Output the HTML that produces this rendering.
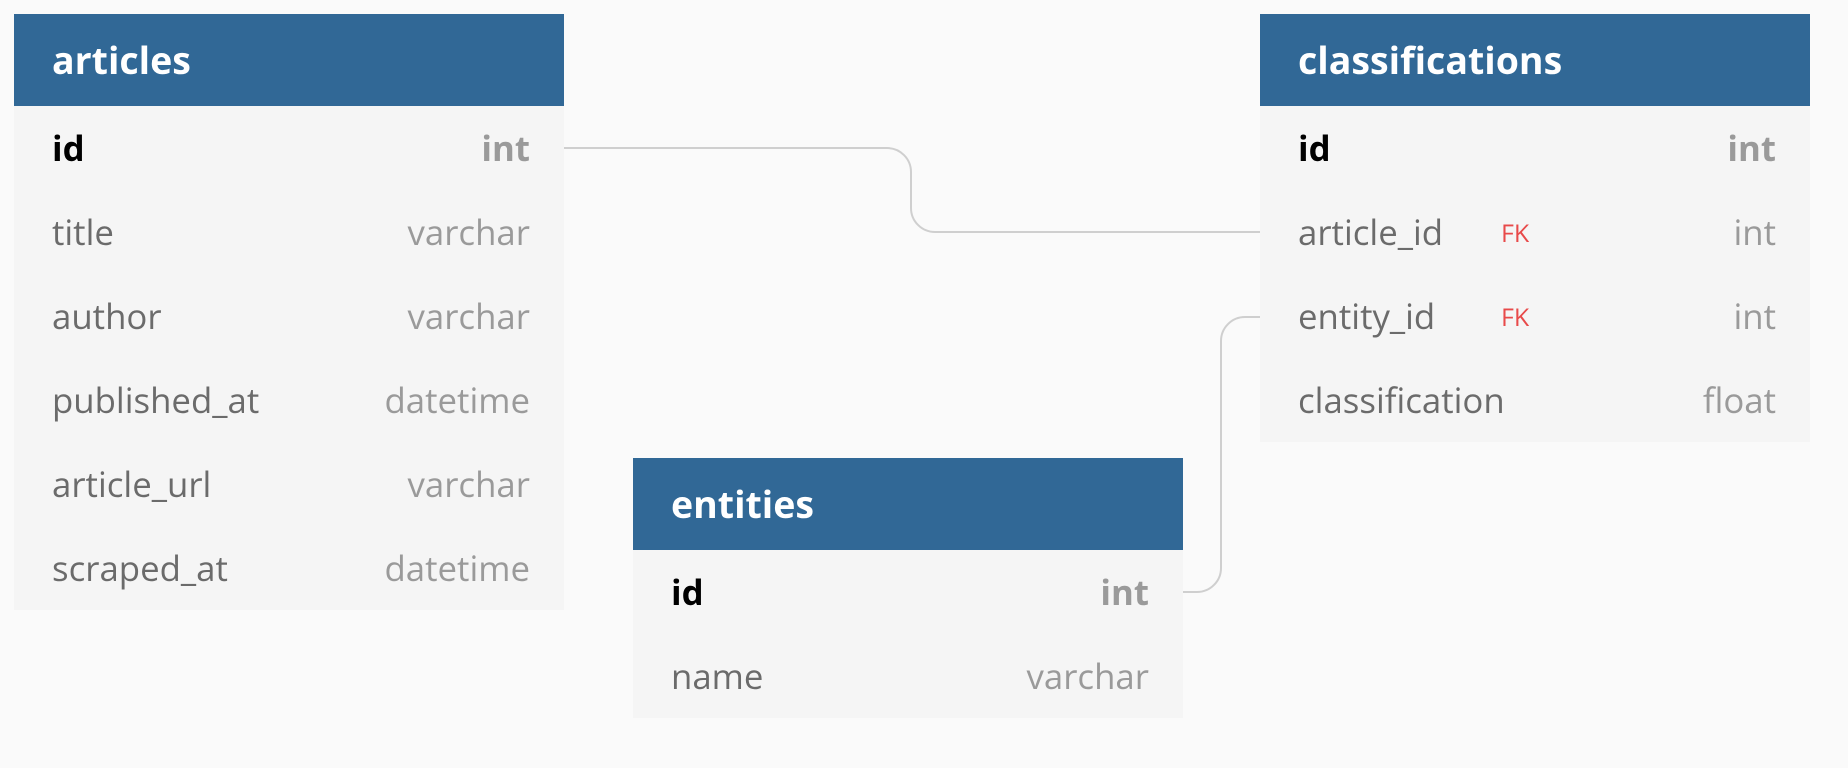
<!DOCTYPE html>
<html><head><style>
body{margin:0;width:1848px;height:768px;background:#fafafa;position:relative;overflow:hidden;font-family:"Open Sans","Liberation Sans",sans-serif}
.t{position:absolute;background:#f5f5f5;width:550px}
.h{height:92px;background:#316896;color:#fff;font-weight:bold;font-size:37.5px;line-height:92px;padding-left:38px;box-sizing:border-box}
.r{height:84px;line-height:86px;font-size:34.8px;color:#6b6b6b;position:relative;padding-left:38px}
.r .ty{position:absolute;right:34px;top:0;color:#9a9a9a}
.r.pk{color:#000;font-weight:bold}
.r.pk .ty{color:#9a9a9a}
.fk{position:absolute;left:241px;top:0;color:#e84a4a;font-size:25px}
svg{position:absolute;left:0;top:0}
</style></head><body>
<svg width="1848" height="768"><g fill="none" stroke="#cfcfcf" stroke-width="2">
<path d="M564 148 H887 A24 24 0 0 1 911 172 V208 A24 24 0 0 0 935 232 H1260"/>
<path d="M1182 592 H1197 A24 24 0 0 0 1221 568 V341 A24 24 0 0 1 1245 317 H1260"/>
</g></svg>
<div class="t" style="left:14px;top:14px">
<div class="h">articles</div>
<div class="r pk">id<span class="ty">int</span></div>
<div class="r">title<span class="ty">varchar</span></div>
<div class="r">author<span class="ty">varchar</span></div>
<div class="r">published_at<span class="ty">datetime</span></div>
<div class="r">article_url<span class="ty">varchar</span></div>
<div class="r">scraped_at<span class="ty">datetime</span></div>
</div>
<div class="t" style="left:1260px;top:14px">
<div class="h">classifications</div>
<div class="r pk">id<span class="ty">int</span></div>
<div class="r">article_id<span class="fk">FK</span><span class="ty">int</span></div>
<div class="r">entity_id<span class="fk">FK</span><span class="ty">int</span></div>
<div class="r">classification<span class="ty">float</span></div>
</div>
<div class="t" style="left:633px;top:458px">
<div class="h">entities</div>
<div class="r pk">id<span class="ty">int</span></div>
<div class="r">name<span class="ty">varchar</span></div>
</div>
</body></html>
